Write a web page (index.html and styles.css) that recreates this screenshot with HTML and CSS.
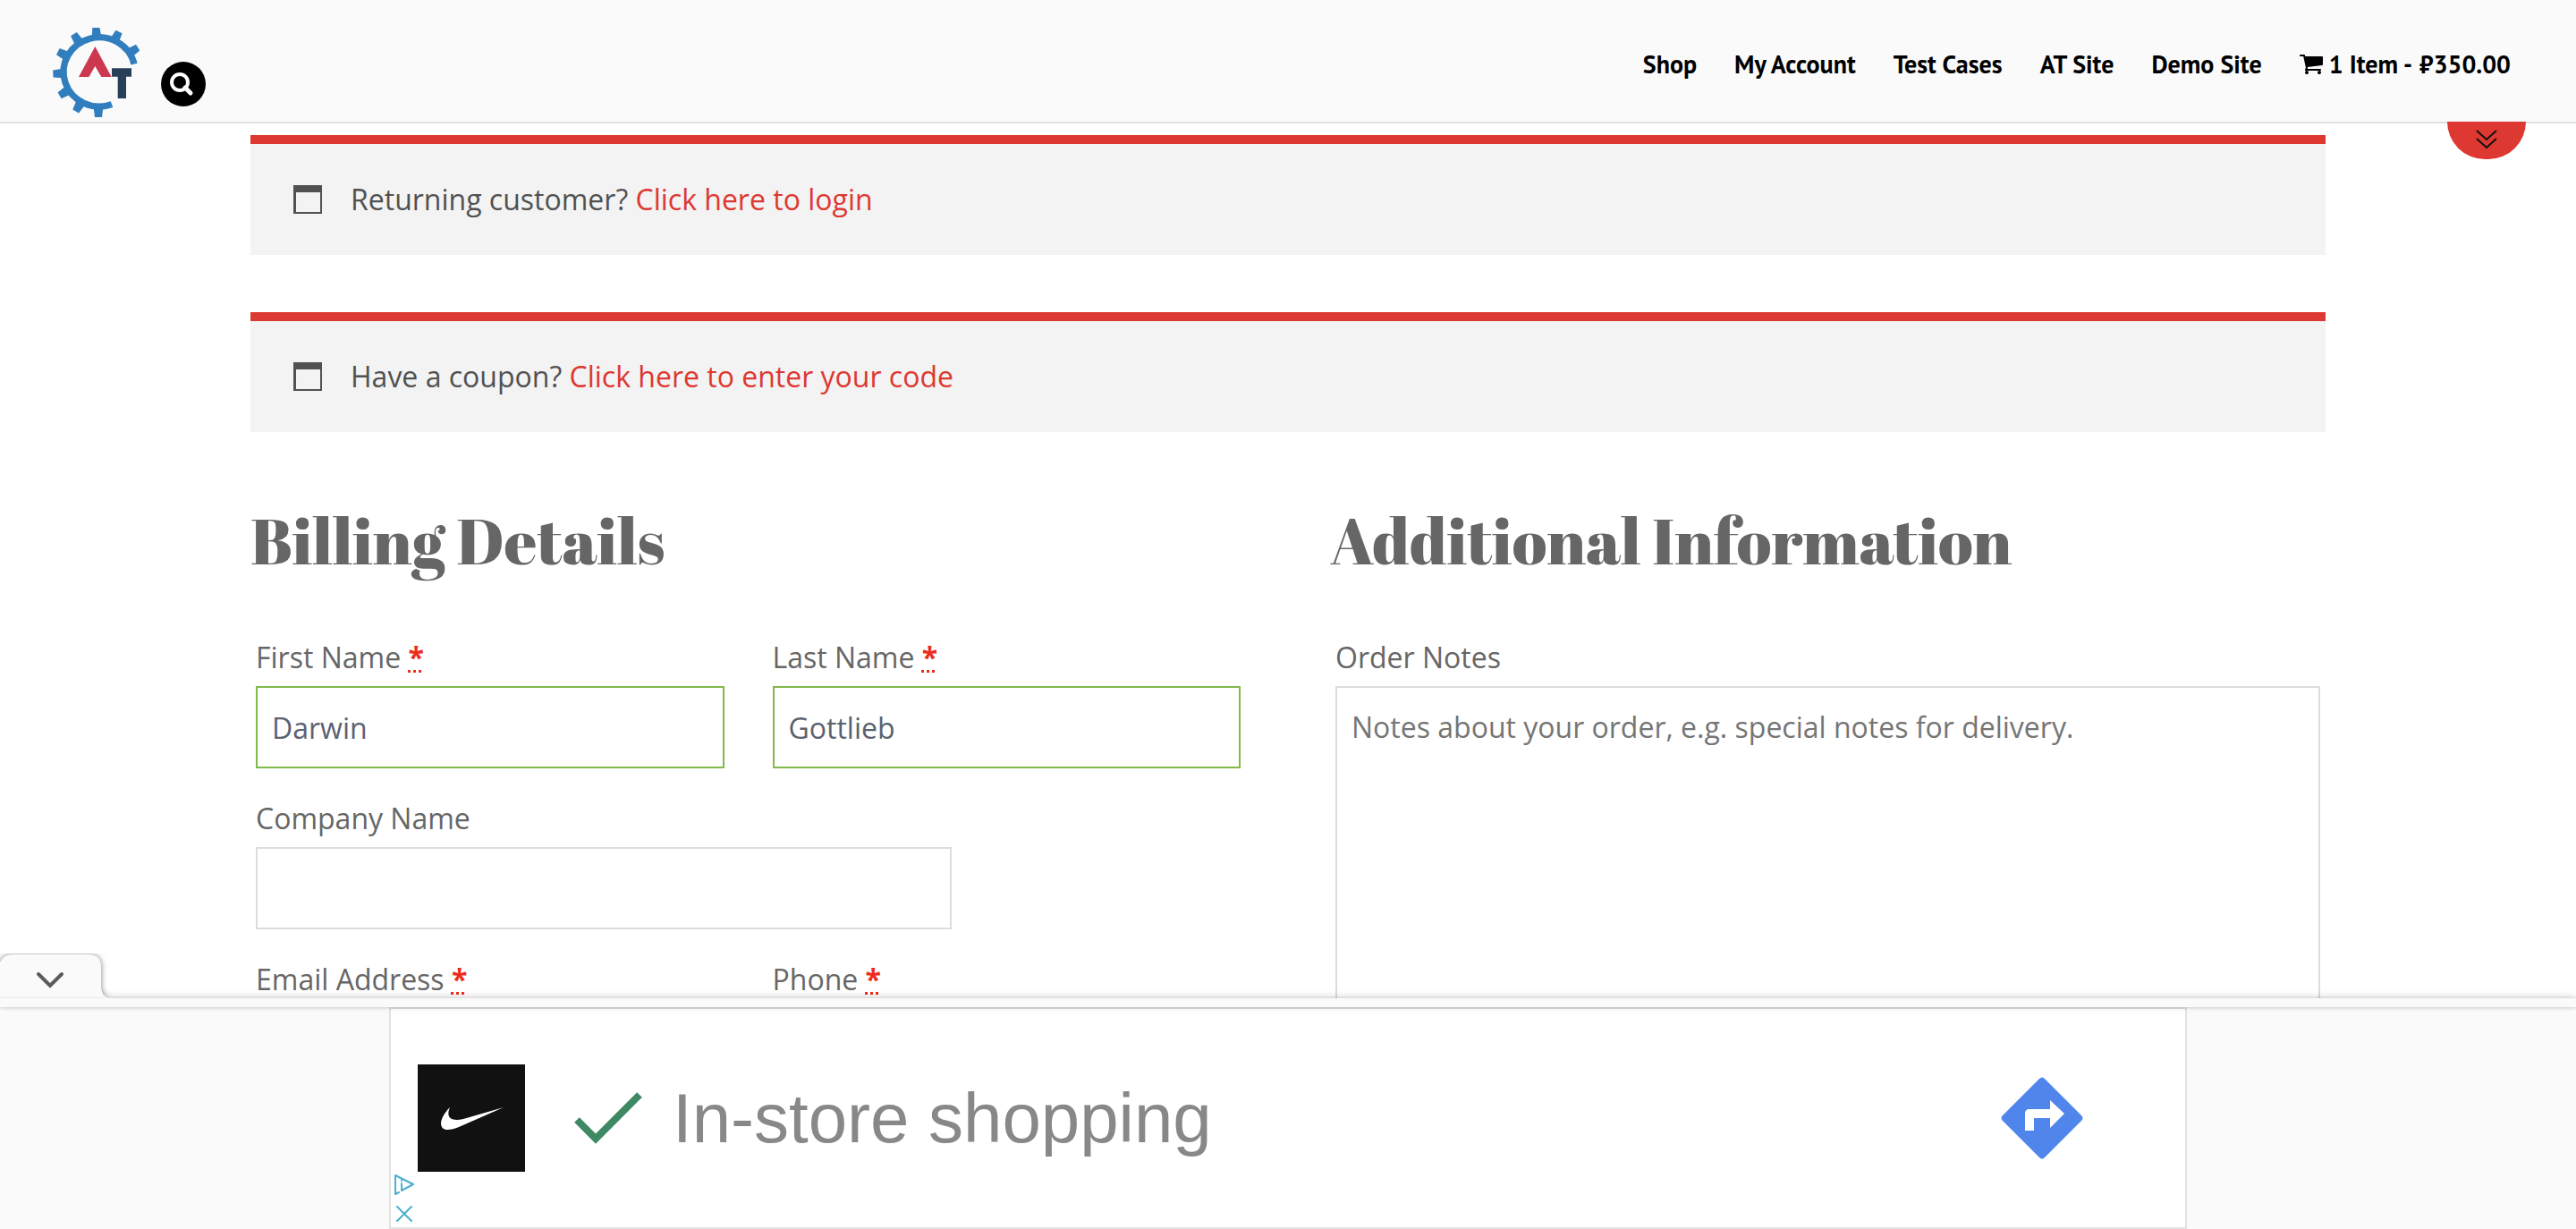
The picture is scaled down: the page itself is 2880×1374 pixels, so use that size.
FILE: index.html
```html
<!DOCTYPE html>
<html lang="en">
<head>
<meta charset="utf-8">
<meta name="viewport" content="width=device-width, initial-scale=1">
<title>Checkout</title>
<link rel="stylesheet" href="styles.css">
</head>
<body>
<header class="site-header">
  <div class="brand">
    <a class="logo" href="#" aria-label="Home">
      <svg width="97" height="100" viewBox="57 63 291 300">
        <path d="M330 185A120 116 0 1 0 255 320" fill="none" stroke="#317ebf" stroke-width="22"/>
        <g fill="#317ebf">
          <path id="tooth" d="M194 94L198 60H222L226 94Z" transform="rotate(-3 210 212)"/>
          <use href="#tooth" transform="rotate(30 210 212)"/>
          <use href="#tooth" transform="translate(5 0) rotate(60 210 212)"/>
          <use href="#tooth" transform="rotate(-30 210 212)"/>
          <use href="#tooth" transform="rotate(-60 210 212)"/>
          <use href="#tooth" transform="rotate(-89 210 212)"/>
          <use href="#tooth" transform="rotate(-118 210 212)"/>
          <use href="#tooth" transform="rotate(-147 210 212)"/>
          <use href="#tooth" transform="rotate(-177 210 212)"/>
        </g>
        <path d="M199 126L254 228H220L199 192L178 228H144Z" fill="#cc3850"/>
        <path d="M255 213H321M289 213V300" fill="none" stroke="#283f58" stroke-width="28"/>
      </svg>
    </a>
    <button class="search" type="button" aria-label="Search">
      <svg width="50" height="50" viewBox="0 0 50 50" fill="none" stroke="#fff">
        <circle cx="21" cy="23" r="9" stroke-width="4"/>
        <path d="M27 29L33 35" stroke-width="5" stroke-linecap="round"/>
      </svg>
    </button>
  </div>
  <nav class="menu">
    <a href="#">Shop</a>
    <a href="#">My Account</a>
    <a href="#">Test Cases</a>
    <a href="#">AT Site</a>
    <a href="#">Demo Site</a>
    <a href="#" class="cart">
      <svg width="26" height="22" viewBox="64 256 1664 1408"><path d="M704 1536q0 52-38 90t-90 38-90-38-38-90 38-90 90-38 90 38 38 90zm896 0q0 52-38 90t-90 38-90-38-38-90 38-90 90-38 90 38 38 90zm128-1088v512q0 24-16.500 42.500t-40.500 21.500l-1044 122q13 60 13 70 0 16-24 64h920q26 0 45 19t19 45-19 45-45 19h-1024q-26 0-45-19t-19-45q0-11 8-31.500t16-36 21.500-40 15.500-29.500l-177-823h-204q-26 0-45-19t-19-45 19-45 45-19h256q16 0 28.500 6.500t19.500 15.500 13 24.500 8 26 5.500 29.500 4.500 26h1201q26 0 45 19t19 45z"/></svg>
      <span>1 Item - <span class="amount">₽350.00</span></span>
    </a>
  </nav>
  <button class="pull" type="button" aria-label="Show more">
    <svg width="24" height="24" viewBox="0 0 24 24" fill="none" stroke="#111" stroke-width="2"><path d="M1 2L12 12L23 2M1 11L12 21L23 11"/></svg>
  </button>
</header>

<main class="checkout">
  <div class="notice">
    <svg width="32" height="32" viewBox="0 0 32 32"><path fill="#515151" fill-rule="evenodd" d="M0 0H32V32H0ZM3 8V30H30V8Z"/></svg>
    <p>Returning customer? <a href="#">Click here to login</a></p>
  </div>
  <div class="notice">
    <svg width="32" height="32" viewBox="0 0 32 32"><path fill="#515151" fill-rule="evenodd" d="M0 0H32V32H0ZM3 8V30H30V8Z"/></svg>
    <p>Have a coupon? <a href="#">Click here to enter your code</a></p>
  </div>
  <form class="columns">
    <section>
      <h3>Billing Details</h3>
      <div class="fields">
        <div class="field"><label for="first">First Name <abbr title="required">*</abbr></label><input class="valid" id="first" type="text" value="Darwin"></div>
        <div class="field"><label for="last">Last Name <abbr title="required">*</abbr></label><input class="valid" id="last" type="text" value="Gottlieb"></div>
        <div class="field wide"><label for="company">Company Name</label><input id="company" type="text"></div>
        <div class="field"><label for="email">Email Address <abbr title="required">*</abbr></label><input id="email" type="email"></div>
        <div class="field"><label for="phone">Phone <abbr title="required">*</abbr></label><input id="phone" type="tel"></div>
      </div>
    </section>
    <section>
      <h3>Additional Information</h3>
      <div class="fields">
        <div class="field full"><label for="notes">Order Notes</label><textarea id="notes" placeholder="Notes about your order, e.g. special notes for delivery."></textarea></div>
      </div>
    </section>
  </form>
</main>

<aside class="anchor-ad">
  <button class="collapse" type="button" aria-label="Collapse">
    <svg width="126" height="50" viewBox="0 0 126 50">
      <path d="M0 50V10Q4 1 14 1H99Q113 1 113 15V36Q113 50 126 50Z" fill="#fafafa"/>
      <path d="M43 23L56 36L69 23" fill="none" stroke="#5a5a5a" stroke-width="4" stroke-linecap="round"/>
    </svg>
  </button>
  <div class="strip"></div>
  <div class="band">
    <div class="ad">
      <svg class="brand-tile" width="120" height="120" viewBox="0 0 120 120"><rect width="120" height="120" fill="#111"/><path d="M36 48C28 56 24 65 27 70C30 75 38 73 46 70L96 48L51 61C38 64 31 60 36 48Z" fill="#fff"/></svg>
      <svg class="tick" width="76" height="58" viewBox="0 0 76 58"><path d="M3 31L24 52L73 3" fill="none" stroke="#3f8864" stroke-width="8"/></svg>
      <a class="ad-title" href="#">In-store shopping</a>
      <a class="directions" href="#" aria-label="Directions"><svg width="92" height="92" viewBox="0 0 92 92"><path d="M43 2Q46 -1 49 2L90 43Q93 46 90 49L49 90Q46 93 43 90L2 49Q-1 46 2 43Z" fill="#5086ec"/><path d="M27 60V41Q27 36 32 36H55V26L71 41L55 57V46H37V60Z" fill="#fff"/></svg></a>
      <div class="ad-controls">
        <button type="button" aria-label="Ad choices"><svg width="24" height="24" viewBox="0 0 24 24" fill="none" stroke="#4bafce" stroke-width="2" stroke-linejoin="round" stroke-linecap="round"><path d="M6 21L2 23V2L22 12L9 19V11M9 7V8"/></svg></button>
        <button type="button" aria-label="Close ad"><svg width="24" height="24" viewBox="0 0 24 24" fill="none" stroke="#4bafce" stroke-width="2" stroke-linecap="round"><path d="M4 4L20 20M20 4L4 20"/></svg></button>
      </div>
    </div>
  </div>
</aside>
</body>
</html>
```
FILE: styles.css
```css
* { box-sizing: border-box; }

body {
  margin: 0;
  background: #fff;
  color: #666;
  font: 32px/56px "Open Sans", "Noto Sans", sans-serif;
}

a { color: #dd3831; text-decoration: none; }
button { padding: 0; border: 0; background: none; cursor: pointer; }
svg { display: block; flex: none; }

.site-header {
  position: fixed;
  inset: 0 0 auto;
  z-index: 2;
  display: flex;
  justify-content: space-between;
  align-items: center;
  height: 138px;
  padding: 8px 73px 0 59px;
  border-bottom: 2px solid #e0e0e0;
  background: #fafafa;
}

.brand { display: flex; align-items: center; gap: 24px; padding-top: 18px; }
.search { margin-top: 26px; border-radius: 50%; background: #000; }

.menu {
  display: flex;
  gap: 42px;
  font: bold 28px/40px "PT Sans", Lato, "Open Sans", sans-serif;
}
.menu a { color: #000; }
.menu .cart { display: flex; align-items: center; gap: 7px; }
.amount { margin-left: 3px; }

.pull {
  position: absolute;
  top: 136px;
  right: 56px;
  display: flex;
  justify-content: center;
  width: 88px;
  height: 42px;
  padding-top: 8px;
  border-radius: 0 0 44px 44px;
  background: #dd3831;
}

.checkout {
  max-width: 2320px;
  margin: 0 auto;
  padding-top: 151px;
}

.notice {
  display: flex;
  align-items: center;
  gap: 32px;
  margin-bottom: 64px;
  padding: 34px 48px;
  border-top: 10px solid #dd3831;
  background: #f3f3f3;
  color: #515151;
}
.notice p { margin: 0; }

.columns {
  display: grid;
  grid-template-columns: 1fr 1fr;
  gap: 94px;
  padding-top: 10px;
}

h3 {
  margin: 0 0 52px;
  font: normal 71px/94px "Abril Fatface", "Liberation Serif", serif;
}

.fields {
  display: grid;
  grid-template-columns: 1fr 1fr;
  gap: 24px 54px;
  padding: 0 6px;
}
.field { display: flex; flex-direction: column; }
.wide { grid-column: 1 / -1; max-width: 778px; }
.full { grid-column: 1 / -1; }

label { line-height: 64px; }

abbr {
  color: #ee2c1b;
  font-weight: bold;
  text-decoration: underline dotted 3px;
}

input,
textarea {
  width: 100%;
  height: 92px;
  margin: 0;
  padding: 0 16px;
  border: 2px solid #ddd;
  border-radius: 0;
  outline: 0;
  background: #fff;
  color: #5b6170;
  font: inherit;
}
.valid { border-color: #82b94b; }

textarea { height: 460px; padding: 16px; resize: none; }
textarea::placeholder { color: #757575; opacity: 1; }

.anchor-ad {
  position: fixed;
  inset: auto 0 0;
  z-index: 3;
  background: #fafafa;
  box-shadow: 0 0 10px rgba(0, 0, 0, .2);
}

.collapse {
  position: absolute;
  bottom: 100%;
  left: 0;
  overflow: hidden;
}
.collapse svg { filter: drop-shadow(0 0 3px rgba(0, 0, 0, .5)); }

.strip {
  position: relative;
  z-index: 1;
  height: 10px;
  background: #fafafa;
  box-shadow: 0 1px 4px rgba(0, 0, 0, .2);
}

.ad {
  position: relative;
  display: flex;
  align-items: center;
  width: 100%;
  max-width: 2010px;
  height: 248px;
  margin: 0 auto;
  padding: 0 114px 0 30px;
  border: 2px solid #e2e2e2;
  background: #fff;
}
.tick { margin: 0 34px 0 55px; }
.ad-title {
  color: #888;
  font: 78px/96px "Liberation Sans", Arial, sans-serif;
}
.directions { margin-left: auto; }

.ad-controls {
  position: absolute;
  bottom: 3px;
  left: 3px;
  display: grid;
  gap: 9px;
}
```
